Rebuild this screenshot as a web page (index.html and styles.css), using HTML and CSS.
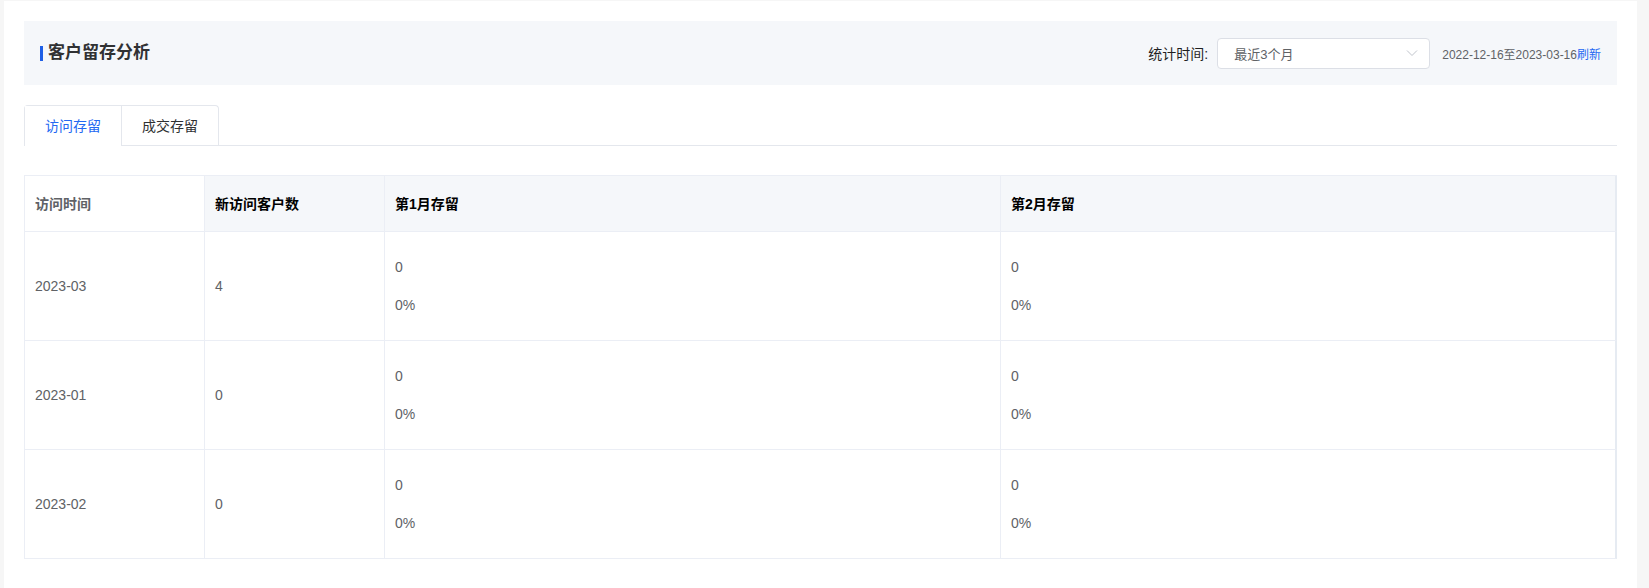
FILE: index.html
```html
<!DOCTYPE html>
<html lang="zh-CN">
<head>
  <meta charset="UTF-8" />
  <meta name="viewport" content="width=device-width, initial-scale=1.0"/>
  <title>客户留存分析</title>
  <link rel="stylesheet" href="styles.css">
</head>
<body>

  <div class="page">

    <!-- 标题栏 -->
    <div class="panel-head">
      <h2 class="panel-title">客户留存分析</h2>
      <div class="filter">
        <span class="filter-label">统计时间:</span>
        <div class="select">
          <span>最近3个月</span>
          <svg class="select-arrow" width="12" height="12" viewBox="0 0 12 12">
            <polyline points="1,3.5 6,8.5 11,3.5" fill="none" stroke="#c0c4cc" stroke-width="1"/>
          </svg>
        </div>
        <span class="range">2022-12-16至2023-03-16</span><a class="refresh" href="#">刷新</a>
      </div>
    </div>

    <!-- 标签页 -->
    <div class="tabs">
      <div class="tab-nav">
        <div class="tab active">访问存留</div>
        <div class="tab">成交存留</div>
      </div>
    </div>

    <!-- 留存表格 -->
    <table class="retention">
      <colgroup>
        <col class="col-fixed">
        <col class="col-fixed">
        <col>
        <col>
      </colgroup>
      <thead>
        <tr>
          <th class="th-first">访问时间</th>
          <th>新访问客户数</th>
          <th>第1月存留</th>
          <th class="last">第2月存留</th>
        </tr>
      </thead>
      <tbody>
        <tr>
          <td>2023-03</td>
          <td>4</td>
          <td class="stack"><div>0</div><div>0%</div></td>
          <td class="stack last"><div>0</div><div>0%</div></td>
        </tr>
        <tr>
          <td>2023-01</td>
          <td>0</td>
          <td class="stack"><div>0</div><div>0%</div></td>
          <td class="stack last"><div>0</div><div>0%</div></td>
        </tr>
        <tr>
          <td>2023-02</td>
          <td>0</td>
          <td class="stack"><div>0</div><div>0%</div></td>
          <td class="stack last"><div>0</div><div>0%</div></td>
        </tr>
      </tbody>
    </table>

  </div>

</body>
</html>
```

FILE: styles.css
```css
body {
  margin: 0;
  padding: 1px 12px 0 4px;
  font-family: "Liberation Sans", "Noto Sans CJK SC", sans-serif;
  background-color: #f6f6f6;
  color: #606266;
}

.page {
  background-color: #fff;
  padding: 20px 20px 0 20px;
  min-height: calc(100vh - 1px);
  box-sizing: border-box;
}

/* 标题栏 */
.panel-head {
  display: flex;
  align-items: center;
  justify-content: space-between;
  height: 64px;
  padding: 0 16px;
  background-color: #f5f7fa;
}

.panel-title {
  margin: 0;
  display: flex;
  align-items: center;
  font-size: 17px;
  line-height: 20px;
  font-weight: bold;
  color: #303133;
}

.panel-title::before {
  content: "";
  width: 3px;
  height: 15px;
  margin-right: 5px;
  background-color: #1e5fe6;
}

.filter {
  display: flex;
  align-items: center;
}

.filter-label {
  font-size: 14px;
  color: #1f1f1f;
  margin-right: 9px;
}

.select {
  display: flex;
  align-items: center;
  justify-content: space-between;
  width: 213px;
  height: 31px;
  box-sizing: border-box;
  padding: 0 11px 0 16px;
  border: 1px solid #dcdfe6;
  border-radius: 4px;
  background-color: #fff;
  font-size: 13px;
  color: #606266;
}

.range {
  margin-left: 12px;
  font-size: 12px;
  color: #606266;
}

.refresh {
  font-size: 12px;
  color: #2468f2;
  text-decoration: none;
}

/* 标签页 */
.tabs {
  display: flex;
  margin-top: 20px;
  border-bottom: 1px solid #e4e7ed;
}

.tab-nav {
  display: flex;
  border: 1px solid #e4e7ed;
  border-bottom: none;
  border-radius: 4px 4px 0 0;
  margin-bottom: -1px;
}

.tab {
  height: 39px;
  line-height: 40px;
  padding: 0 20px;
  font-size: 14px;
  color: #303133;
  border-bottom: 1px solid transparent;
}

.tab + .tab {
  border-left: 1px solid #e4e7ed;
}

.tab.active {
  color: #2468f2;
  background-color: #fff;
  border-bottom-color: #fff;
}

/* 表格 */
.retention {
  width: 100%;
  margin-top: 29px;
  table-layout: fixed;
  border-collapse: separate;
  border-spacing: 0;
  border-top: 1px solid #ebeef5;
  border-left: 1px solid #ebeef5;
  font-size: 14px;
}

.col-fixed {
  width: 180px;
}

.retention th,
.retention td {
  padding: 0 10px;
  text-align: left;
  border-right: 1px solid #ebeef5;
  border-bottom: 1px solid #ebeef5;
  line-height: 20px;
}

.retention th {
  height: 55px;
  font-weight: bold;
  color: #000;
  background-color: #f5f7fa;
}

.retention th.th-first {
  color: #606266;
  background-color: #fff;
}

.retention td {
  height: 108px;
  box-sizing: border-box;
  color: #606266;
}

.retention td.stack {
  padding: 25px 10px;
}

.retention td.stack div + div {
  margin-top: 18px;
}

.retention .last {
  border-right: 2px solid #e6ebf2;
}
```
